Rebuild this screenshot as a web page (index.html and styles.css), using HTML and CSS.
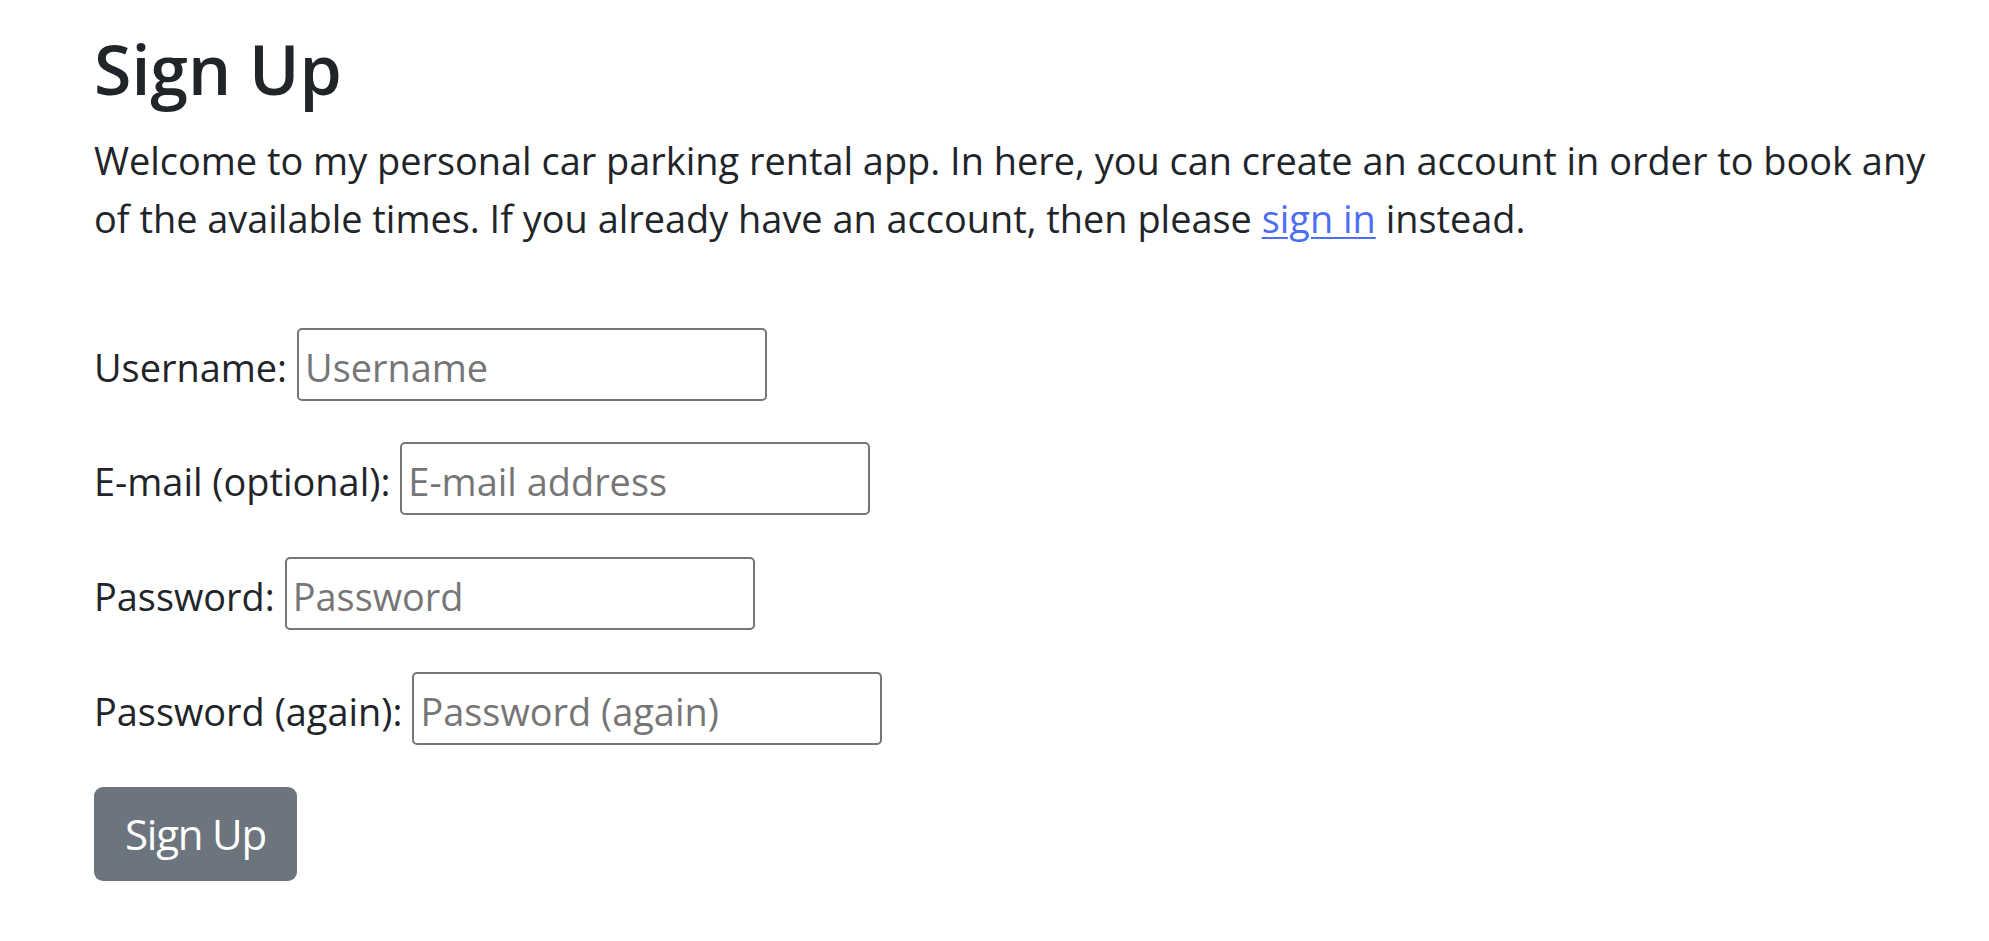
FILE: index.html
```html
<!DOCTYPE html>
<html lang="en">
<head>
<meta charset="utf-8">
<title>Sign Up</title>
<link rel="stylesheet" href="styles.css">
</head>
<body>
<main class="page">
  <h1 class="title">Sign Up</h1>
  <p class="intro">Welcome to my personal car parking rental app. In here, you can create an account in order to book any of the available times. If you already have an account, then please <a class="link" href="#">sign in</a> instead.</p>
  <form class="form">
    <div class="field">
      <label class="label" for="username">Username:</label>
      <input class="input" id="username" type="text" placeholder="Username">
    </div>
    <div class="field">
      <label class="label" for="email">E-mail (optional):</label>
      <input class="input" id="email" type="email" placeholder="E-mail address">
    </div>
    <div class="field">
      <label class="label" for="password1">Password:</label>
      <input class="input" id="password1" type="password" placeholder="Password">
    </div>
    <div class="field">
      <label class="label" for="password2">Password (again):</label>
      <input class="input" id="password2" type="password" placeholder="Password (again)">
    </div>
    <button class="btn" type="submit">Sign Up</button>
  </form>
</main>
</body>
</html>
```
FILE: styles.css
```css
html, body {
  margin: 0;
  padding: 0;
  background: #ffffff;
}

body {
  font-family: "Open Sans", "Noto Sans", sans-serif;
  font-size: 37.9px;
  line-height: 58px;
  color: #212529;
}

.page {
  padding: 28px 0 0 94px;
  max-width: 1850px;
}

.title {
  margin: 0 0 21px 0;
  font-size: 68px;
  font-weight: 600;
  line-height: 81.6px;
  color: #212529;
}

.intro {
  margin: 0 0 81px 0;
}

.link {
  color: #4c6ef5;
  text-decoration: underline;
  text-decoration-thickness: 2px;
  text-underline-offset: 4px;
}

.form {
  margin: 0;
}

.field {
  display: flex;
  align-items: center;
  gap: 10px;
  height: 73px;
  margin-bottom: 41.75px;
}

.label {
  white-space: nowrap;
  padding-top: 5px;
}

.input {
  box-sizing: border-box;
  width: 470px;
  height: 73px;
  padding: 5px 6px 0 6px;
  border: 2px solid #767676;
  border-radius: 5px;
  font-family: inherit;
  font-size: 37.9px;
  color: #212529;
  background: #ffffff;
  outline: none;
}

.input::placeholder {
  color: #767676;
  opacity: 1;
}

.btn {
  box-sizing: border-box;
  height: 94px;
  width: 203px;
  padding: 0;
  border: none;
  border-radius: 9px;
  background: #6c757d;
  color: #ffffff;
  font-family: inherit;
  font-size: 42px;
  letter-spacing: -1.2px;
  cursor: pointer;
}
```
